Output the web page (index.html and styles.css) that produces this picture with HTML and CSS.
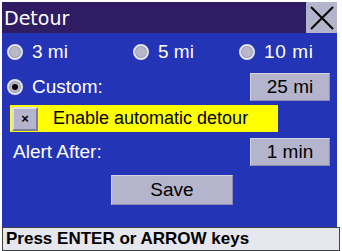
FILE: index.html
```html
<!DOCTYPE html>
<html>
<head>
<meta charset="utf-8">
<link rel="stylesheet" href="styles.css">
</head>
<body>
<div class="screen">
  <div class="titlebar">
    <span class="title">Detour</span>
    <div class="close">
      <svg width="28" height="28" viewBox="0 0 28 28"><path d="M3 3 L25 25 M25 3 L3 25" stroke="#000" stroke-width="2" fill="none"/></svg>
    </div>
  </div>
  <div class="body">
    <div class="row radios">
      <div class="opt o1"><span class="radio"></span><span class="lbl">3 mi</span></div>
      <div class="opt o2"><span class="radio"></span><span class="lbl">5 mi</span></div>
      <div class="opt o3"><span class="radio"></span><span class="lbl">10 mi</span></div>
    </div>
    <div class="row custom">
      <div class="opt"><span class="radio on"></span><span class="lbl">Custom:</span></div>
      <div class="btn small">25 mi</div>
    </div>
    <div class="row enable">
      <div class="check">&#215;</div>
      <span class="enable-lbl">Enable automatic detour</span>
    </div>
    <div class="row alert">
      <span class="lbl alert-lbl">Alert After:</span>
      <div class="btn small">1 min</div>
    </div>
    <div class="row saverow">
      <div class="btn save">Save</div>
    </div>
  </div>
  <div class="status">Press ENTER or ARROW keys</div>
</div>
</body>
</html>
```

FILE: styles.css
```css
html, body { margin: 0; padding: 0; background: #ffffff; }
body { font-family: "Liberation Sans", Arial, sans-serif; }
.screen {
  width: 335px; height: 249px;
  margin: 2px 0 0 2px;
  display: flex; flex-direction: column;
  background: #2434b6;
}
.titlebar {
  height: 31px;
  background: #2f1c63;
  display: flex; align-items: center; justify-content: space-between;
}
.title { color: #fff; font-family: "DejaVu Sans", sans-serif; font-size: 19px; padding-left: 2px; }
.close {
  width: 31px; height: 31px; background: #b4b4cc;
  display: flex; align-items: center; justify-content: center;
}
.body { flex: 1; display: flex; flex-direction: column; }
.row { display: flex; align-items: center; }
.radios { height: 36px; padding-top: 1px; }
.opt { display: flex; align-items: center; }
.o1 { margin-left: 5px; width: 126px; }
.o2 { width: 106px; }
.radio {
  width: 12px; height: 12px; border-radius: 50%;
  background: #b8b8ca;
  border: 2px solid #e0e0ea;
  box-shadow: inset 0 0 0 1px #9a9ab4;
  margin-right: 9px;
  position: relative;
}
.radio.on::after {
  content: ""; position: absolute; left: 3px; top: 3px;
  width: 6px; height: 6px; border-radius: 50%; background: #000;
}
.lbl { color: #fff; font-size: 19px; }
.o3 .lbl { letter-spacing: 0.6px; }
.custom { height: 33px; justify-content: space-between; padding-left: 5px; padding-right: 7px; }
.btn {
  background: #b4b4cc; color: #000; font-size: 19px;
  display: flex; align-items: center; justify-content: center;
  border-top: 1px solid #d4d4e4; border-left: 1px solid #d4d4e4;
  border-right: 1px solid #8c8cac; border-bottom: 1px solid #8c8cac;
}
.small { width: 78px; height: 26px; }
.enable {
  margin-left: 8px; width: 268px; height: 27px; background: #ffff00;
  margin-top: 2px;
}
.check {
  width: 26px; height: 24px; margin-left: 2px;
  background: #b4b4cc;
  border-top: 2px solid #dedee8; border-left: 2px solid #dedee8;
  border-right: 2px solid #7c7c9c; border-bottom: 2px solid #7c7c9c;
  box-sizing: border-box;
  display: flex; align-items: center; justify-content: center;
  font-size: 13px; font-weight: bold; color: #000;
}
.enable-lbl { color: #000; font-size: 18px; margin-left: 15px; }
.alert { height: 34px; margin-top: 3px; justify-content: space-between; padding-left: 11px; padding-right: 7px; }
.saverow { height: 30px; margin-top: 6px; padding-left: 109px; }
.save { width: 120px; height: 28px; }
.status {
  height: 22px; margin-top: auto;
  background: #e6e6ee;
  border: 1px solid #404048;
  font-size: 17px; font-weight: bold; color: #000;
  padding-left: 3px; line-height: 22px;
  width: 333px;
}
```
